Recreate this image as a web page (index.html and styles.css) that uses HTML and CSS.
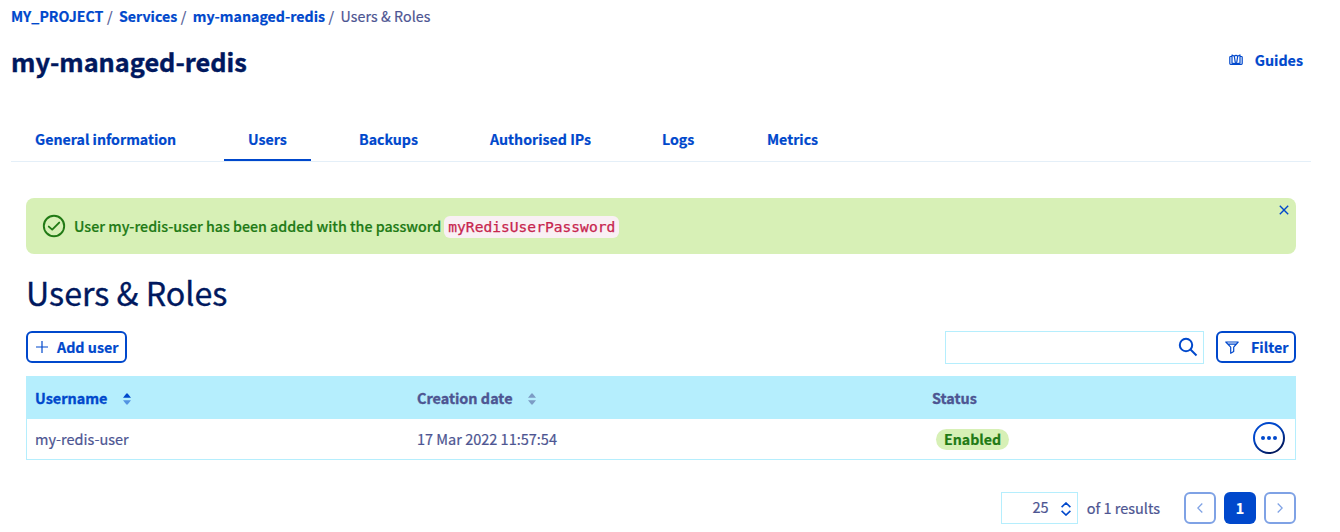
FILE: index.html
```
<!DOCTYPE html>
<html lang="en">
<head>
<meta charset="utf-8">
<title>my-managed-redis</title>
<link rel="stylesheet" href="styles.css">
</head>
<body>
<nav class="breadcrumb"><a>MY_PROJECT</a><i>/</i><a>Services</a><i>/</i><a>my-managed-redis</a><i>/</i><span>Users &amp; Roles</span></nav>
<header class="header">
  <h1>my-managed-redis</h1>
  <a class="guides">
    <svg width="14" height="12" viewBox="0 0 14 12" fill="none" stroke="currentColor" stroke-width="1.2" stroke-linejoin="round"><path d="M3 2.500H1.600Q.8 2.500.8 3.300v6.200q0 .8.8.8h10.800q.8 0 .8-.8V3.300q0-.8-.8-.8H11M3 1l2.300 1.200 1.200 7.600L3 9zM5.300 2.200Q7 .6 8.700 2.200M7.500 9.800l1.200-7.600L11 1v8z"/></svg>
    <span>Guides</span>
  </a>
</header>
<nav class="tabs"><a class="t1">General information</a><a class="t2 active">Users</a><a class="t3">Backups</a><a class="t4">Authorised IPs</a><a class="t5">Logs</a><a class="t6">Metrics</a></nav>
<main class="content">
  <div class="alert">
    <svg class="check" width="24" height="24" viewBox="0 0 24 24" fill="none" stroke="currentColor" stroke-width="1.9" stroke-linecap="round" stroke-linejoin="round"><circle cx="12" cy="12" r="10.200"/><path d="m6.800 12.600 3.400 3 7-7"/></svg>
    <span class="message">User my-redis-user has been added with the password</span>
    <code>myRedisUserPassword</code>
    <svg class="close" width="10" height="10" viewBox="0 0 10 10" fill="none" stroke="currentColor" stroke-width="1.4"><path d="m.8.800 8.400 8.400M9.200.8.800 9.200"/></svg>
  </div>
  <h2>Users &amp; Roles</h2>
  <div class="toolbar">
    <button class="btn add"><svg width="12" height="12" viewBox="0 0 12 12" stroke="currentColor" stroke-width="1.200"><path d="M6 0v12M0 6h12"/></svg><span>Add user</span></button>
    <div class="tools">
      <div class="search"><svg width="20" height="20" viewBox="0 0 20 20" fill="none" stroke="currentColor" stroke-width="2"><circle cx="8" cy="8" r="6.200"/><path d="m12.500 12.500 6 6"/></svg></div>
      <button class="btn filter"><svg width="14" height="13" viewBox="0 0 14 13" fill="none" stroke="currentColor" stroke-width="1.200" stroke-linejoin="round"><path d="M.8 1h12.400L8.700 6.200v4.300l-3 1.800V6.200zM2.700 3.200h8.600"/></svg><span>Filter</span></button>
    </div>
  </div>
  <div class="table">
    <div class="row head">
      <div class="cell sorted"><span>Username</span><svg class="sort" width="8" height="12" viewBox="0 0 8 12" fill="currentColor"><path d="M0 4.800 3.200.7q.8-.8 1.600 0L8 4.800z"/><path opacity=".55" d="M0 7.200h8l-3.200 4.100q-.8.800-1.600 0z"/></svg></div>
      <div class="cell"><span>Creation date</span><svg class="sort dim" width="8" height="12" viewBox="0 0 8 12" fill="currentColor"><path d="M0 4.800 3.200.7q.8-.8 1.600 0L8 4.800zM0 7.200h8l-3.200 4.100q-.8.800-1.600 0z"/></svg></div>
      <div class="cell"><span>Status</span></div>
      <div></div>
    </div>
    <div class="row">
      <div class="cell"><span>my-redis-user</span></div>
      <div class="cell"><span>17 Mar 2022 11:57:54</span></div>
      <div class="cell"><span class="badge">Enabled</span></div>
      <div class="actions"><svg width="32" height="32" viewBox="0 0 32 32"><defs><linearGradient id="ring" x1="0" y1="0" x2="0.600" y2="1"><stop offset=".4" stop-color="#0048cc"/><stop offset="1" stop-color="#00185e"/></linearGradient></defs><circle cx="16" cy="16" r="15" fill="#fff" stroke="url(#ring)" stroke-width="2"/><g fill="#0048cc"><circle cx="10" cy="16" r="2"/><circle cx="16" cy="16" r="2"/><circle cx="22" cy="16" r="2"/></g></svg></div>
    </div>
  </div>
  <div class="pager">
    <div class="size"><span>25</span><svg width="10" height="14" viewBox="0 0 10 14" fill="none" stroke="currentColor" stroke-width="1.600"><path d="M.6 5.200 5 1l4.400 4.200M.6 8.800 5 13l4.400-4.200"/></svg></div>
    <span class="results">of 1 results</span>
    <a class="page off"><svg width="6" height="10" viewBox="0 0 6 10" fill="none" stroke="currentColor" stroke-width="1.300"><path d="M5.300.5.800 5l4.500 4.500"/></svg></a>
    <a class="page current">1</a>
    <a class="page off"><svg width="6" height="10" viewBox="0 0 6 10" fill="none" stroke="currentColor" stroke-width="1.300"><path d="M.7.500 5.200 5 .7 9.500"/></svg></a>
  </div>
</main>
</body>
</html>
```
FILE: styles.css
```
* { box-sizing: border-box; }
body { margin: 0; width: 1340px; height: 532px; overflow: hidden; background: #fff; color: #4d5592; font: 14.3px/20px "Noto Sans CJK SC", "Open Sans", sans-serif; -webkit-text-stroke: .2px; }
svg { display: block; flex: none; }
span, a, h1, h2, code { white-space: nowrap; }
.breadcrumb { display: flex; height: 32px; padding: 6px 0 0 11px; font-size: 14.2px; }
.breadcrumb a { color: #0048cc; font-weight: 700; }
.breadcrumb i { font-style: normal; margin: 0 6.500px 0 3.500px; }
.breadcrumb span { letter-spacing: .1px; }
.header { display: flex; justify-content: space-between; height: 84px; padding: 13px 37px 0 11px; }
h1 { margin: 0; font-size: 25.3px; line-height: 32px; font-weight: 700; color: #00185e; -webkit-text-stroke: .4px; }
.guides { display: flex; align-items: center; gap: 12px; height: 30px; color: #0048cc; font-weight: 700; }
.tabs { display: flex; height: 46px; margin: 0 29px 0 11px; border-bottom: 1px solid #e4eff8; font-size: 14.2px; }
.tabs a { height: 45px; padding: 13px 0 0 24px; color: #0048cc; font-weight: 700; }
.t1 { width: 213px; }
.t2 { width: 87px; }
.t3 { width: 155px; }
.t4 { width: 148px; }
.t5 { width: 129px; }
.tabs .t3, .tabs .t5 { padding-left: 48px; }
.tabs .active { border-bottom: 2px solid #0048cc; }
.content { padding: 36px 44px 0 26px; }
.alert { position: relative; display: flex; align-items: center; height: 56px; padding-left: 16px; border-radius: 8px; background: #d7f0b6; color: #217a15; }
.message { margin: 0 3px 0 8px; font-weight: 500; font-size: 14.22px; }
.alert code { margin-top: 2px; padding: 0 4px; border-radius: 6px; background: #f9f0f4; color: #c7254e; font: 14.6px/22px "DejaVu Sans Mono", monospace; -webkit-text-stroke: .25px; }
.close { position: absolute; top: 7px; right: 7px; color: #0048cc; }
h2 { margin: 17px 0 0; font-size: 32.2px; line-height: 42px; font-weight: 400; color: #00185e; -webkit-text-stroke: .35px; }
.toolbar { display: flex; justify-content: space-between; height: 33px; margin-top: 18px; }
.btn { display: flex; align-items: center; height: 32px; padding: 0 6px 0 8px; border: 2px solid #0048cc; border-radius: 6px; background: #fff; color: #0048cc; font: inherit; font-weight: 700; }
.add { width: 101px; gap: 9px; }
.filter { width: 80px; gap: 12px; padding-left: 7px; }
.tools { display: flex; gap: 12px; }
.search { display: flex; justify-content: flex-end; width: 259px; height: 33px; padding: 5px 5px 0 0; border: 1px solid #b5eefd; color: #0048cc; }
.table { margin-top: 12px; border: 1px solid #b5eefd; }
.row { display: grid; grid-template-columns: 382px 515px 1fr 42px; height: 40px; align-items: center; font-size: 14.5px; }
.head { height: 42px; background: #b5eefd; font-weight: 700; font-size: 14.4px; -webkit-text-stroke: .35px; }
.cell { display: flex; align-items: center; padding-left: 8px; }
.sorted { color: #0048cc; }
.sort { margin-left: 15.500px; margin-top: 1px; }
.dim { color: #7c9cc5; }
.badge { height: 21px; margin-left: 4px; padding: 0 8px; border-radius: 11px; background: #d7f0b6; color: #217a15; font-weight: 700; font-size: 14.2px; line-height: 21px; }
.actions { padding-bottom: 3px; }
.pager { display: flex; justify-content: flex-end; height: 32px; margin-top: 32px; }
.size { display: flex; align-items: center; justify-content: flex-end; gap: 12px; width: 77px; padding-right: 6px; border: 1px solid #b5eefd; font-size: 14.5px; }
.size span { margin-top: -3px; }
.size svg { color: #0048cc; margin-top: 1px; }
.results { margin: 6px 24px 0 9px; font-size: 14.5px; }
.page { display: flex; align-items: center; justify-content: center; width: 32px; height: 32px; margin-left: 8px; border-radius: 6px; }
.results + .page { margin-left: 0; }
.off { border: 2px solid #7fa2e5; color: #7fa2e5; }
.current { background: #0048cc; color: #fff; font-weight: 700; }
```
